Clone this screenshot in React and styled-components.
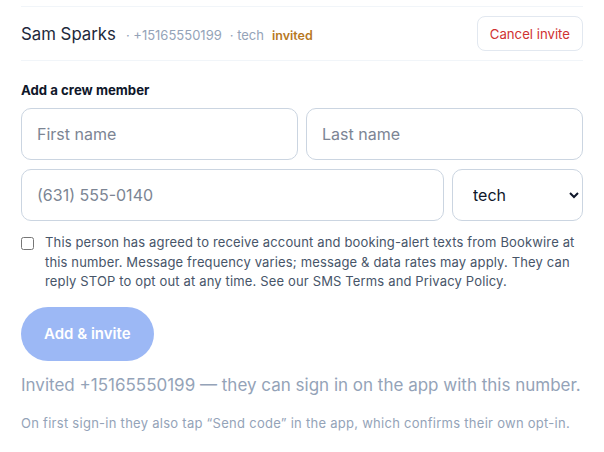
import styled, { createGlobalStyle } from "styled-components";
import { useState } from "react";

const GlobalStyle = createGlobalStyle`
  body {
    margin: 0;
    background: #ffffff;
    font-family: Inter, "Noto Sans", "Liberation Sans", sans-serif;
    color: #1e293b;
  }
  * { box-sizing: border-box; }
`;

const Page = styled.div`
  padding: 6px 21px 0;
`;

// fila del tripulante ya invitado
const MemberRow = styled.div`
  display: flex;
  align-items: center;
  justify-content: space-between;
  padding: 9px 0;
  border-top: 1px solid #f1f5f9;
  border-bottom: 1px solid #f1f5f9;
`;

const MemberInfo = styled.div`
  display: flex;
  align-items: baseline;
  gap: 8px;
`;

const Name = styled.span`
  font-size: 16.8px;
  color: #1e293b;
  margin-right: 2px;
`;

const Meta = styled.span`
  font-size: 13px;
  color: #94a3b8;
`;

const Status = styled.span`
  font-size: 12.5px;
  font-weight: 600;
  color: #b7791f;
`;

const CancelButton = styled.button`
  height: 35px;
  padding: 0 12px;
  border: 1px solid #e2e8f0;
  border-radius: 8px;
  background: #ffffff;
  color: #d03232;
  font-family: inherit;
  font-size: 13.2px;
  cursor: pointer;
`;

const Heading = styled.h3`
  margin: 21px 0 10px;
  font-size: 13.2px;
  line-height: 16px;
  font-weight: 700;
  color: #0f172a;
`;

const FieldRow = styled.div`
  display: grid;
  grid-template-columns: ${(p) => p.$cols};
  gap: 8px;
  margin-bottom: 9px;
`;

const Input = styled.input`
  height: 52px;
  width: 100%;
  padding: 0 15px;
  border: 1px solid #cbd5e1;
  border-radius: 10px;
  font-family: inherit;
  font-size: 16px;
  color: #1e293b;
  outline: none;

  &::placeholder {
    color: #7c8594;
  }
`;

const Select = styled.select`
  height: 52px;
  width: 100%;
  padding: 0 4px 0 16px;
  border: 1px solid #cbd5e1;
  border-radius: 10px;
  background: #ffffff;
  font-family: inherit;
  font-size: 16px;
  color: #0f172a;
  outline: none;
`;

const Consent = styled.label`
  display: flex;
  align-items: flex-start;
  gap: 11px;
  margin-top: 12px;
  font-size: 13px;
  letter-spacing: 0.15px;
  line-height: 19.5px;
  color: #475569;
`;

const Check = styled.input`
  margin: 4px 0 0;
  width: 13px;
  height: 13px;
  flex-shrink: 0;
`;

const ConsentText = styled.span`
  flex: 1;
  min-width: 0;
`;

const AddButton = styled.button`
  margin-top: 15px;
  height: 54px;
  padding: 0 23px;
  border: none;
  border-radius: 27px;
  background: #2563eb;
  opacity: 0.45;
  color: #ffffff;
  font-family: inherit;
  font-size: 15px;
  font-weight: 600;
  cursor: not-allowed;
`;

const Notice = styled.p`
  margin: 12px 0 0;
  font-size: 17px;
  line-height: 24px;
  color: #94a3b8;
`;

const Hint = styled.p`
  margin: 16px 0 0;
  font-size: 13px;
  letter-spacing: 0.27px;
  line-height: 20px;
  color: #94a3b8;
`;

const App = () => {
  const [acepta, setAcepta] = useState(false);

  return (
    <Page>
      <GlobalStyle />
      <MemberRow>
        <MemberInfo>
          <Name>Sam Sparks</Name>
          <Meta>· +15165550199</Meta>
          <Meta>· tech</Meta>
          <Status>invited</Status>
        </MemberInfo>
        <CancelButton type="button">Cancel invite</CancelButton>
      </MemberRow>

      <Heading>Add a crew member</Heading>
      <FieldRow $cols="1fr 1fr">
        <Input placeholder="First name" />
        <Input placeholder="Last name" />
      </FieldRow>
      <FieldRow $cols="1fr 131px">
        <Input placeholder="(631) 555-0140" />
        <Select defaultValue="tech">
          <option value="tech">tech</option>
          <option value="lead">lead</option>
          <option value="driver">driver</option>
        </Select>
      </FieldRow>

      <Consent>
        <Check
          type="checkbox"
          checked={acepta}
          onChange={(e) => setAcepta(e.target.checked)}
        />
        <ConsentText>
          This person has agreed to receive account and booking-alert texts
          from Bookwire at this number. Message frequency varies; message &amp;
          data rates may apply. They can reply STOP to opt out at any time. See
          our SMS Terms and Privacy Policy.
        </ConsentText>
      </Consent>

      <AddButton type="button" disabled={!acepta}>
        Add &amp; invite
      </AddButton>

      <Notice>
        Invited +15165550199 — they can sign in on the app with this number.
      </Notice>
      <Hint>
        On first sign-in they also tap “Send code” in the app, which confirms
        their own opt-in.
      </Hint>
    </Page>
  );
};

export default App;
